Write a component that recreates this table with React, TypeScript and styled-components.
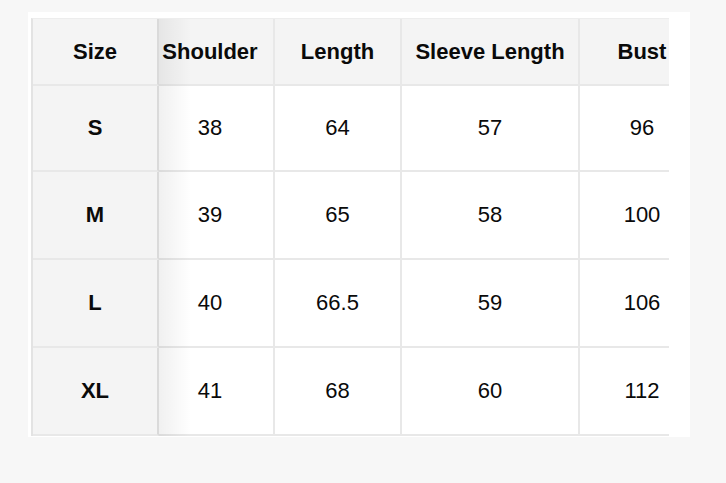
import React from "react";
import styled, { createGlobalStyle } from "styled-components";

type Row = { size: string; values: string[] };

const headers = ["Size", "Shoulder", "Length", "Sleeve Length", "Bust"];
const widths = [126, 116, 127, 178, 126];

const rows: Row[] = [
  { size: "S", values: ["38", "64", "57", "96"] },
  { size: "M", values: ["39", "65", "58", "100"] },
  { size: "L", values: ["40", "66.5", "59", "106"] },
  { size: "XL", values: ["41", "68", "60", "112"] },
];

const GlobalStyle = createGlobalStyle`
  html, body {
    margin: 0;
    padding: 0;
    background: #f7f7f7;
  }
  body {
    font-family: "Liberation Sans", Arial, sans-serif;
    color: #0a0a0a;
  }
`;

const Page = styled.div`
  min-height: 483px;
  padding: 12px 0 0 28px;
  box-sizing: border-box;
`;

const Card = styled.div`
  width: 662px;
  height: 425px;
  box-sizing: border-box;
  padding: 6px 21px 2px 3px;
  background: #fff;
`;

const Scroller = styled.div`
  width: 638px;
  overflow: hidden;
`;

const Table = styled.table`
  border-collapse: separate;
  border-spacing: 0;
  table-layout: fixed;
  width: ${widths.reduce((a, b) => a + b, 0)}px;
  border-left: 2px solid #e3e3e3;
  border-top: 1px solid #ededed;
`;

const Cell = styled.td<{ $head?: boolean; $sticky?: boolean; $shift?: number }>`
  position: relative;
  z-index: ${(p) => (p.$sticky ? 2 : 0)};
  padding: 0 ${(p) => p.$shift ?? 0}px 0 0;
  text-align: center;
  vertical-align: middle;
  font-size: 22px;
  font-weight: ${(p) => (p.$head || p.$sticky ? 700 : 400)};
  background: ${(p) => (p.$head || p.$sticky ? "#f4f4f4" : "#fff")};
  border-right: 2px solid ${(p) => (p.$sticky ? "#dadada" : "#e8e8e8")};
  border-bottom: 2px solid #e8e8e8;
  white-space: nowrap;

  ${(p) =>
    p.$sticky &&
    `
    &::after {
      content: "";
      position: absolute;
      top: 0;
      bottom: -2px;
      right: -34px;
      width: 32px;
      background: linear-gradient(to right, rgba(0, 0, 0, 0.06), rgba(0, 0, 0, 0));
      pointer-events: none;
    }
  `}
`;

const HeadRow = styled.tr`
  height: 67px;
`;

const BodyRow = styled.tr<{ $height: number }>`
  height: ${(p) => p.$height}px;
`;

export default function App() {
  return (
    <>
      <GlobalStyle />
      <Page>
        <Card>
          <Scroller>
            <Table>
              <colgroup>
                {widths.map((w, i) => (
                  <col key={i} style={{ width: w }} />
                ))}
              </colgroup>
              <thead>
                <HeadRow>
                  {headers.map((h, i) => (
                    <Cell as="th" key={h} $head $sticky={i === 0} $shift={i === 1 ? 12 : 0}>
                      {h}
                    </Cell>
                  ))}
                </HeadRow>
              </thead>
              <tbody>
                {rows.map((r, ri) => (
                  <BodyRow key={r.size} $height={ri === 0 ? 86 : 88}>
                    <Cell $sticky>{r.size}</Cell>
                    {r.values.map((v, i) => (
                      <Cell key={i} $shift={i === 0 ? 12 : 0}>
                        {v}
                      </Cell>
                    ))}
                  </BodyRow>
                ))}
              </tbody>
            </Table>
          </Scroller>
        </Card>
      </Page>
    </>
  );
}
